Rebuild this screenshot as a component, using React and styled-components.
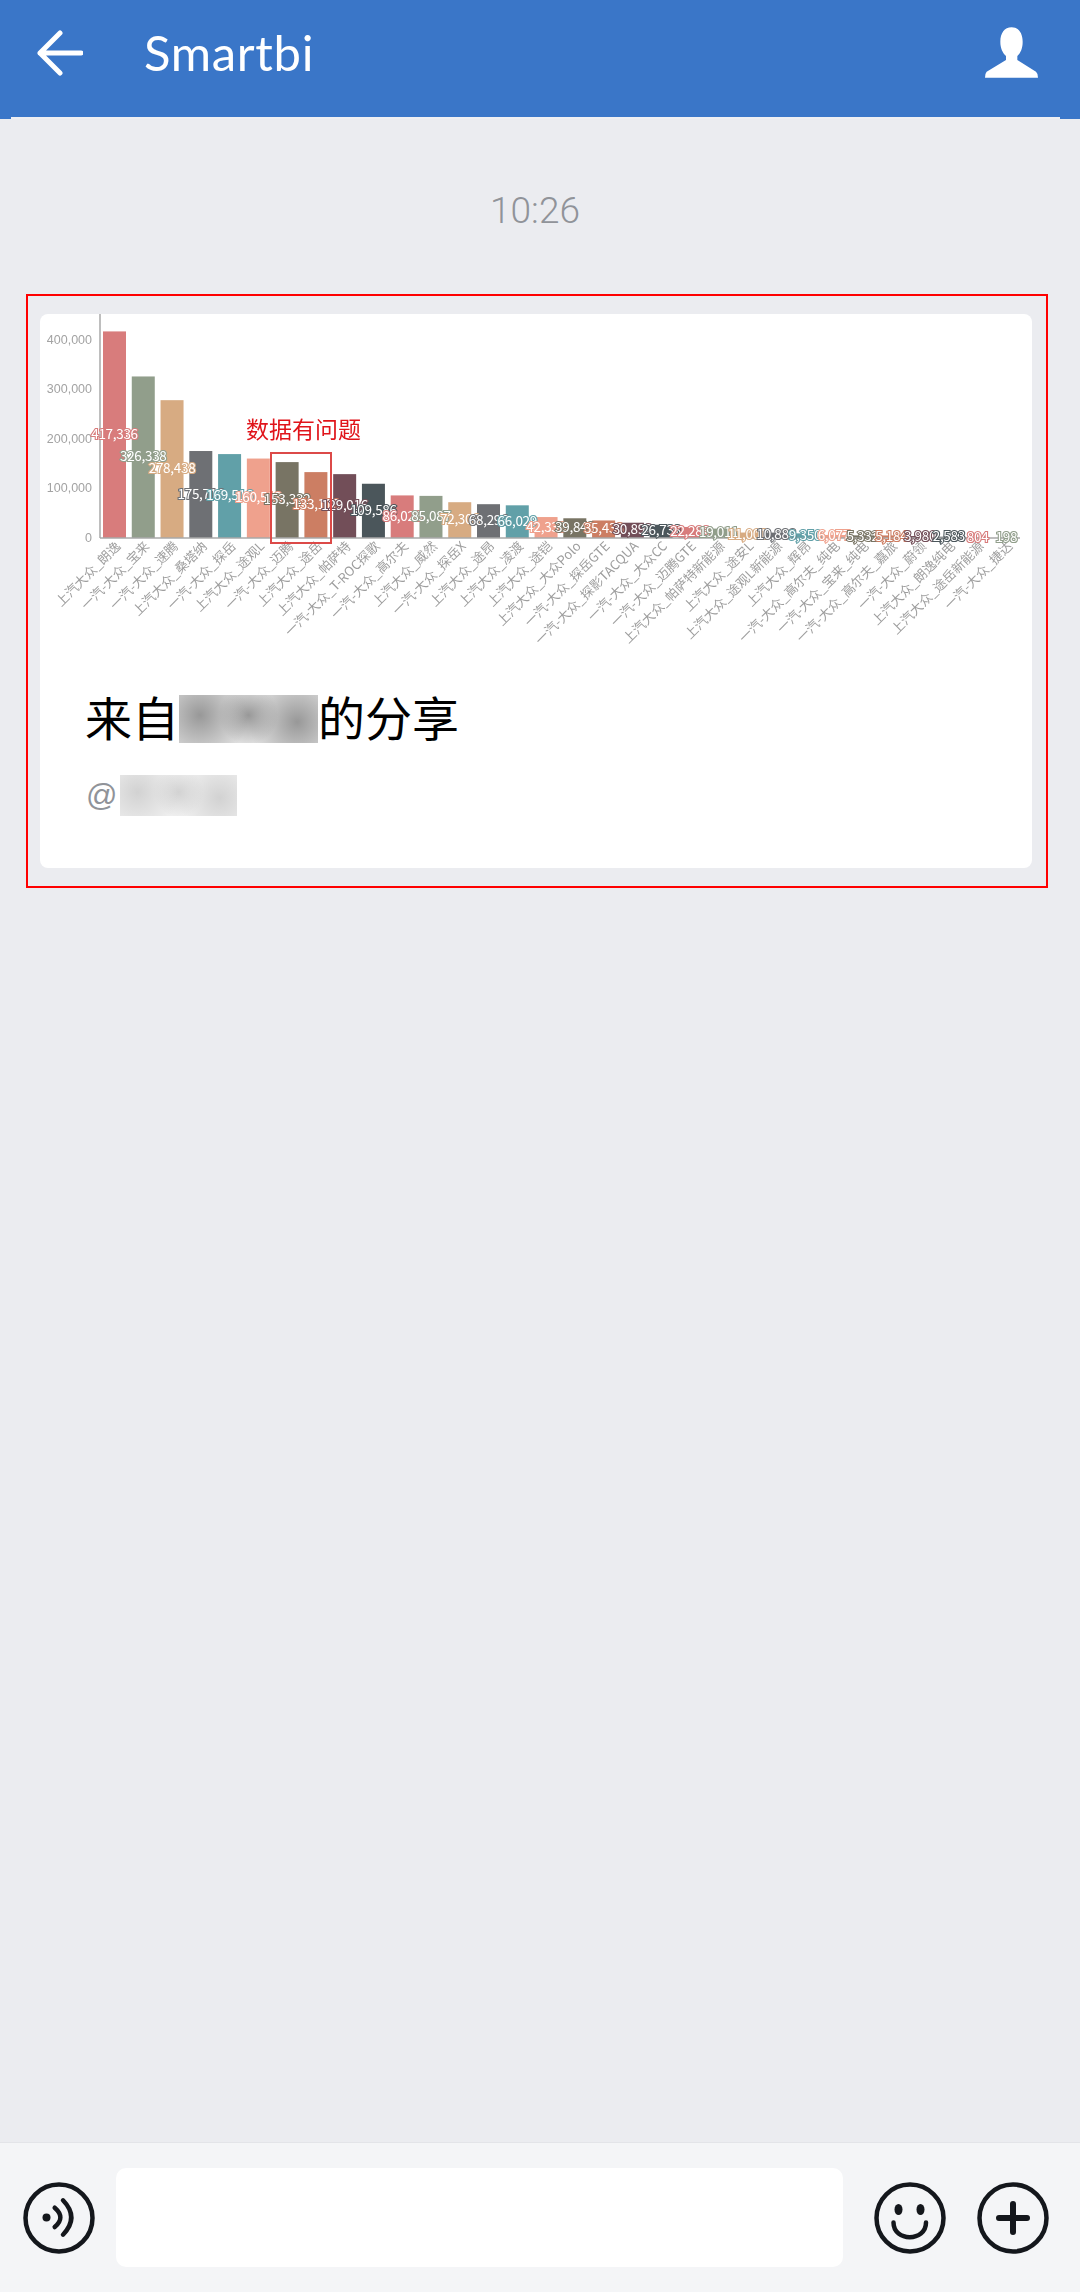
import styled, { createGlobalStyle } from "styled-components";

const GlobalStyle = createGlobalStyle`
  html, body {
    margin: 0;
    padding: 0;
    background: #ebecf0;
    font-family: "Noto Sans CJK SC", "Liberation Sans", sans-serif;
  }
`;

const COLORS = ["#d87c7c", "#919e8b", "#d7ab82", "#6e7074", "#61a0a8", "#efa18d", "#787464", "#cc7e63", "#724e58", "#4b565b"];

const DATA = [
  ["上汽大众_朗逸", 417336],
  ["一汽-大众_宝来", 326338],
  ["一汽-大众_速腾", 278438],
  ["上汽大众_桑塔纳", 175716],
  ["一汽-大众_探岳", 169516],
  ["上汽大众_途观L", 160513],
  ["一汽-大众_迈腾", 153332],
  ["上汽大众_途岳", 133116],
  ["上汽大众_帕萨特", 129016],
  ["一汽-大众_T-ROC探歌", 109586],
  ["一汽-大众_高尔夫", 86028],
  ["上汽大众_威然", 85087],
  ["一汽-大众_探岳X", 72306],
  ["上汽大众_途昂", 68296],
  ["上汽大众_凌渡", 66029],
  ["上汽大众_途铠", 42333],
  ["上汽大众_大众Polo", 39843],
  ["一汽-大众_探岳GTE", 35433],
  ["一汽-大众_探影TACQUA", 30893],
  ["一汽-大众_大众CC", 26733],
  ["一汽-大众_迈腾GTE", 22283],
  ["上汽大众_帕萨特新能源", 19011],
  ["上汽大众_途安L", 11001],
  ["上汽大众_途观L新能源", 10888],
  ["上汽大众_辉昂", 9350],
  ["一汽-大众_高尔夫_纯电", 6077],
  ["一汽-大众_宝来_纯电", 5332],
  ["一汽-大众_高尔夫_嘉旅", 5184],
  ["一汽-大众_蔚领", 3980],
  ["上汽大众_朗逸纯电", 2583],
  ["上汽大众_途岳新能源", 804],
  ["一汽-大众_捷达", 198],
];

const TICKS = [0, 100000, 200000, 300000, 400000];
const BASE_Y = 538;
const PX_PER_UNIT = 49.5 / 100000;
const FIRST_X = 103;
const PITCH = 28.77;
const BAR_W = 23;

const Page = styled.div`
  width: 1080px;
  height: 2292px;
  display: flex;
  flex-direction: column;
  overflow: hidden;
  background: #ebecf0;
`;

const Header = styled.header`
  position: relative;
  flex: none;
  height: 119px;
  box-sizing: border-box;
  padding: 0 42px 14px 37px;
  display: flex;
  align-items: center;
  background: #3a76c8;
  &::after {
    content: "";
    position: absolute;
    left: 11px;
    right: 20px;
    bottom: 0;
    height: 2px;
    background: #eeeff3;
  }
`;

const Title = styled.h1`
  flex: 1;
  margin: 0 0 0 61px;
  font: 400 49px/1 Lato, "Liberation Sans", sans-serif;
  letter-spacing: 0.7px;
  color: #fff;
`;

const Main = styled.main`
  flex: 1;
  padding: 0 32px 0 26px;
`;

const Time = styled.div`
  height: 175px;
  box-sizing: border-box;
  padding: 8px 4px 0 0;
  display: flex;
  align-items: center;
  justify-content: center;
  font: 300 37px/1 Roboto, "Liberation Sans", sans-serif;
  color: #909399;
`;

const Frame = styled.section`
  box-sizing: border-box;
  height: 594px;
  padding: 18px 14px 18px 12px;
  border: 2px solid #f00;
`;

const Card = styled.article`
  height: 100%;
  border-radius: 8px;
  background: #fff;
`;

const Chart = styled.svg`
  display: block;
  filter: blur(0.35px);
`;

const AxisLine = styled.line`
  stroke: #a9a9a9;
  stroke-width: 1.5;
`;

const TickLabel = styled.text`
  font: 12.5px "Liberation Sans", sans-serif;
  fill: #a3a3a3;
  text-anchor: end;
`;

const NameLabel = styled.text`
  font: 13px "Noto Sans CJK SC", sans-serif;
  fill: #9e9e9e;
  text-anchor: end;
`;

const ValueLabel = styled.text`
  font: 13.5px "Noto Sans CJK SC", sans-serif;
  letter-spacing: -0.3px;
  fill: #fff;
  stroke-width: 2.2;
  paint-order: stroke;
  text-anchor: middle;
`;

const Note = styled.text`
  font: 23px "Noto Sans CJK SC", sans-serif;
  fill: #e0141a;
`;

const NoteBox = styled.rect`
  fill: none;
  stroke: #dc4a48;
  stroke-width: 2;
`;

const Share = styled.div`
  padding: 41px 48px 0 45px;
`;

const ShareLine = styled.div`
  display: flex;
  align-items: flex-start;
  font-size: 47px;
  line-height: 42px;
  color: #000;
`;

const FromLine = styled.div`
  margin: 32px 0 0 1px;
  display: flex;
  align-items: center;
  gap: 2.5px;
  font: 400 31px/38px "Liberation Sans", sans-serif;
  color: #909399;
`;

const Redacted = styled.span`
  flex: none;
  width: ${(p) => p.$w}px;
  height: ${(p) => p.$h}px;
  background:
    radial-gradient(circle at 15% 42%, ${(p) => p.$ink} 0, transparent 40%),
    radial-gradient(circle at 50% 42%, ${(p) => p.$ink} 0, transparent 40%),
    radial-gradient(circle at 85% 56%, ${(p) => p.$ink} 0, transparent 40%),
    ${(p) => p.$paper};
`;

const Footer = styled.footer`
  flex: none;
  height: 150px;
  box-sizing: border-box;
  padding: 0 31px 0 23px;
  display: flex;
  align-items: center;
  border-top: 1px solid #e3e4e8;
  background: #f4f5f7;
`;

const InputBox = styled.div`
  width: 727px;
  height: 99px;
  margin: 0 31px 0 21px;
  border-radius: 10px;
  background: #fff;
`;

const RoundIcon = styled.svg`
  flex: none;
  width: 72px;
  height: 72px;
  margin-right: ${(p) => p.$gap || 0}px;
  fill: none;
  stroke: #14171c;
  stroke-width: 4.5;
  stroke-linecap: round;
`;

const Dot = styled.ellipse`
  fill: #14171c;
  stroke: none;
`;

const BackIcon = () => (
  <svg width="46" height="46" viewBox="0 0 46 46" fill="none" stroke="#fff" strokeWidth="5" strokeLinecap="round" strokeLinejoin="round">
    <path d="M3 23H44M23 3L3 23L23 43" />
  </svg>
);

const UserIcon = () => (
  <svg width="53" height="51" viewBox="75 52 159 151" fill="#fff">
    <path d="M155 52C133 52 121 70 121 95C121 115 128 128 138 138L138 150L80 185Q75 190 75 203L234 203Q234 190 228 185L172 150L172 138C182 128 188 115 188 95C188 70 177 52 155 52Z" />
  </svg>
);

const BarChart = () => (
  <Chart width="992" height="340" viewBox="40 314 992 340">
    {DATA.map(([name, value], i) => {
      const h = value * PX_PER_UNIT;
      return <rect key={name} x={FIRST_X + PITCH * i} y={BASE_Y - h} width={BAR_W} height={h} fill={COLORS[i % 10]} />;
    })}
    <AxisLine x1="100" y1="314" x2="100" y2={BASE_Y} />
    <AxisLine x1="100" y1={BASE_Y} x2="1020" y2={BASE_Y} />
    {TICKS.map((t) => (
      <TickLabel key={t} x="92" y={537 - t * PX_PER_UNIT + 4.5}>
        {t.toLocaleString("en-US")}
      </TickLabel>
    ))}
    {DATA.map(([name], i) => {
      const cx = FIRST_X + BAR_W / 2 + PITCH * i + 7;
      return (
        <NameLabel key={name} x={cx} y="547" transform={`rotate(-45 ${cx} 547)`}>
          {name}
        </NameLabel>
      );
    })}
    {DATA.map(([name, value], i) => (
      <ValueLabel key={name} x={FIRST_X + BAR_W / 2 + PITCH * i} y={BASE_Y - (value * PX_PER_UNIT) / 2 + 4} stroke={COLORS[i % 10]}>
        {value.toLocaleString("en-US")}
      </ValueLabel>
    ))}
    <NoteBox x="271" y="453" width="60" height="90" />
    <Note x="246" y="438">数据有问题</Note>
  </Chart>
);

export default function App() {
  return (
    <>
      <GlobalStyle />
      <Page>
        <Header>
          <BackIcon />
          <Title>Smartbi</Title>
          <UserIcon />
        </Header>
        <Main>
          <Time>10:26</Time>
          <Frame>
            <Card>
              <BarChart />
              <Share>
                <ShareLine>
                  来自
                  <Redacted $w={139} $h={48} $ink="#989898" $paper="#e2e2e2" />
                  的分享
                </ShareLine>
                <FromLine>
                  @
                  <Redacted $w={117} $h={41} $ink="#d2d2d2" $paper="#f0f0f0" />
                </FromLine>
              </Share>
            </Card>
          </Frame>
        </Main>
        <Footer>
          <RoundIcon viewBox="0 0 72 72">
            <circle cx="36" cy="36" r="33.5" />
            <Dot cx="23.5" cy="35.5" rx="4" ry="4" />
            <path d="M31.7 25.7Q43 35.5 31.7 45M40 18.3Q56.6 35.5 40 52.7" />
          </RoundIcon>
          <InputBox />
          <RoundIcon viewBox="0 0 72 72" $gap={31}>
            <circle cx="36" cy="36" r="33.5" />
            <Dot cx="24.5" cy="27.5" rx="4" ry="5.5" />
            <Dot cx="46.5" cy="27.5" rx="4" ry="5.5" />
            <path d="M19.5 40.5C19.5 60 52 60 52 40.5" />
          </RoundIcon>
          <RoundIcon viewBox="0 0 72 72">
            <circle cx="36" cy="36" r="33.5" />
            <path d="M36 22V50M22 36H50" strokeWidth="6" />
          </RoundIcon>
        </Footer>
      </Page>
    </>
  );
}
